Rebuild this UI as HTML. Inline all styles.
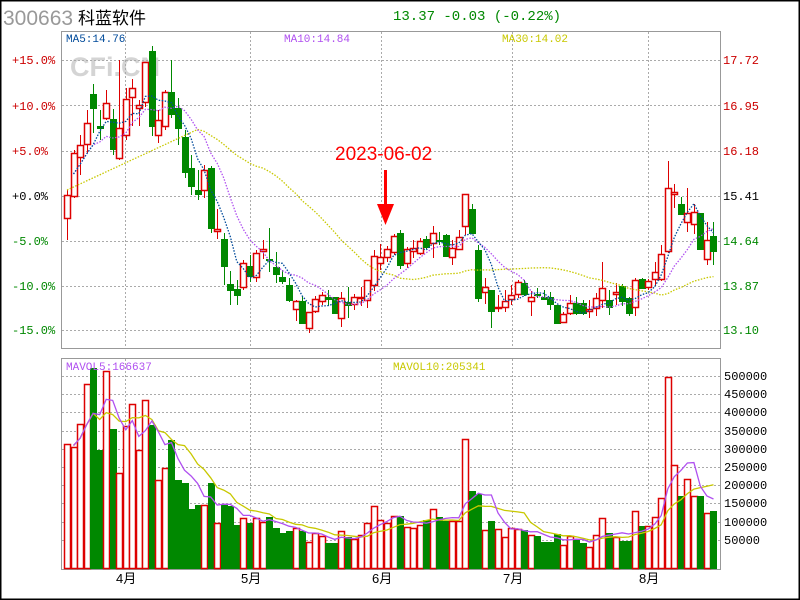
<!DOCTYPE html>
<html><head><meta charset="utf-8"><style>
html,body{margin:0;padding:0;background:#fff;}
#w{position:relative;width:800px;height:600px;overflow:hidden;}
svg{position:absolute;left:0;top:0;}
</style></head><body><div id="w">
<svg id="s" width="800" height="600" xmlns="http://www.w3.org/2000/svg" font-family="Liberation Mono, monospace">
<rect x="0.5" y="0.5" width="799" height="599" fill="#fff" stroke="#000" stroke-width="2"/>
<text x="3" y="25" font-family="Liberation Sans, sans-serif" font-size="21" fill="#999">300663</text>
<text x="78" y="24" font-family="Liberation Sans, 'Noto Sans CJK SC', sans-serif" font-size="17" fill="#000">科蓝软件</text>
<text x="393" y="20" font-size="14" fill="#008800">13.37 -0.03 (-0.22%)</text>
<text x="70" y="76" font-family="Liberation Sans, sans-serif" font-weight="bold" font-size="27" fill="#d4d4d4">CFi.CN</text>
<g id="grid" stroke="#aaa" stroke-dasharray="2,2" stroke-width="1"></g>
<rect x="61.5" y="31.5" width="659" height="317" fill="none" stroke="#999"/>
<rect x="61.5" y="358.5" width="659" height="211" fill="none" stroke="#999"/>
<g id="c"></g>
<text x="66" y="42" font-size="11" fill="#004a9a">MA5:14.76</text>
<text x="284" y="42" font-size="11" fill="#b050f0">MA10:14.84</text>
<text x="502" y="42" font-size="11" fill="#c8c800">MA30:14.02</text>
<text x="66" y="370" font-size="11" fill="#b050f0">MAVOL5:166637</text>
<text x="393" y="370" font-size="11" fill="#c8c800">MAVOL10:205341</text>
<g font-size="12">
<text x="12" y="64" fill="#cc0000">+15.0%</text>
<text x="12" y="110" fill="#cc0000">+10.0%</text>
<text x="12" y="155" fill="#cc0000">+5.0%</text>
<text x="12" y="200" fill="#000">+0.0%</text>
<text x="12" y="245" fill="#008800">-5.0%</text>
<text x="12" y="290" fill="#008800">-10.0%</text>
<text x="12" y="334" fill="#008800">-15.0%</text>
<text x="723" y="64" fill="#cc0000">17.72</text>
<text x="723" y="110" fill="#cc0000">16.95</text>
<text x="723" y="155" fill="#cc0000">16.18</text>
<text x="723" y="200" fill="#000">15.41</text>
<text x="723" y="245" fill="#008800">14.64</text>
<text x="723" y="290" fill="#008800">13.87</text>
<text x="723" y="334" fill="#008800">13.10</text>
</g>
<g font-size="12" fill="#000">
<text x="724" y="380">500000</text><text x="724" y="398">450000</text><text x="724" y="416">400000</text>
<text x="724" y="435">350000</text><text x="724" y="453">300000</text><text x="724" y="471">250000</text>
<text x="724" y="489">200000</text><text x="724" y="507">150000</text><text x="724" y="526">100000</text>
<text x="724" y="544">50000</text>
</g>
<g font-size="13" fill="#000" font-family="Liberation Sans, 'Noto Sans CJK SC', sans-serif">
<text x="116" y="583">4月</text><text x="241" y="583">5月</text><text x="372" y="583">6月</text>
<text x="503" y="583">7月</text><text x="639" y="583">8月</text>
</g>
<text x="335" y="160" font-size="19" fill="#ff0000" font-family="Liberation Sans, sans-serif">2023-06-02</text>
<rect x="384" y="170" width="3" height="42" fill="#ff0000"/>
<polygon points="377,204 394,204 385.5,225" fill="#ff0000"/>
</svg>
<script>
var NS="http://www.w3.org/2000/svg";
function el(p,t,a){var e=document.createElementNS(NS,t);for(var k in a)e.setAttribute(k,a[k]);p.appendChild(e);return e;}
var g=document.getElementById('grid');
[60,105,151,196,241,286,330].forEach(function(y){el(g,'line',{x1:62,x2:720,y1:y+.5,y2:y+.5});});
for(var y=376;y<=541;y+=18.2){el(g,'line',{x1:62,x2:720,y1:Math.round(y)+.5,y2:Math.round(y)+.5});}
[125,250,381,512,648].forEach(function(x){el(g,'line',{x1:x+.5,x2:x+.5,y1:32,y2:348});el(g,'line',{x1:x+.5,x2:x+.5,y1:359,y2:569});});
var C=[
['R',195,218,190,240],['R',153,196,150,198],['R',145,157,135,175],['R',123,144,110,153],['G',94,108,84,133],
['G',126,128,110,140],['R',103,118,90,120],['G',119,149,109,155],['R',128,158,60,160],['R',99,135,88,140],
['R',88,97,79,126],['R',105,108,100,126],['R',62,102,62,107],['G',51,126,46,136],['R',120,135,110,143],
['R',92,126,90,130],['G',92,114,60,118],['G',108,128,98,145],['G',137,172,130,178],['G',168,186,155,195],
['G',190,194,170,200],['R',170,190,165,198],['G',168,228,166,233],['R',229,231,209,239],['G',239,266,233,285],
['G',284,290,271,305],['G',289,295,280,305],['R',263,287,260,290],['G',266,276,255,282],['R',253,277,250,282],
['R',249,251,240,259],['G',259,260,228,272],['G',267,274,252,283],['G',277,281,270,284],['G',285,300,278,302],
['R',301,309,300,321],['G',301,323,296,324],['R',312,328,312,333],['R',299,311,296,313],['R',295,301,292,305],
['G',297,299,290,306],['G',297,313,297,313],['R',298,318,292,327],['G',302,305,287,318],['R',297,304,294,310],
['R',297,298,287,306],['R',280,300,280,308],['R',256,285,250,291],['R',257,263,244,270],['R',249,257,246,262],
['R',236,252,234,255],['G',233,265,230,269],['R',249,263,247,268],['R',248,251,240,258],['R',241,253,238,255],
['G',239,247,236,249],['R',233,243,226,258],['G',240,241,232,245],['G',235,256,234,257],['R',248,257,240,265],
['R',237,249,230,250],['R',194,226,194,235],['G',209,233,204,234],['G',250,298,245,302],['R',287,292,278,304],
['G',290,311,290,328],['R',307,308,295,312],['R',301,307,290,312],['R',295,299,285,305],['R',282,294,280,298],
['G',283,294,280,296],['R',297,301,291,316],['G',294,295,288,298],['G',297,299,290,300],['G',297,304,292,310],
['G',305,323,305,324],['R',314,322,312,323],['R',303,313,295,315],['G',303,313,297,315],['G',303,313,300,315],
['R',309,311,300,318],['R',298,308,293,316],['R',288,300,262,308],['G',300,307,290,315],['R',292,294,283,305],
['G',286,301,284,306],['G',298,313,297,316],['R',280,307,278,316],['G',279,288,278,289],['R',281,287,279,290],
['R',272,279,262,286],['R',254,279,245,281],['R',188,251,161,253],['R',192,194,184,208],['G',204,214,197,215],
['R',213,222,188,232],['R',212,224,204,234],['G',213,249,213,250],['R',240,259,222,265],['G',236,251,222,265]];
var V=[444,447,424,384,368,450,371,429,473,426,404,450,400,425,480,468,440,480,483,509,505,505,483,523,505,506,525,518,523,518,
522,517,528,533,531,528,531,542,533,536,543,543,531,537,539,535,523,506,520,523,516,516,527,528,525,520,509,517,521,521,
521,439,491,494,530,521,529,537,528,529,530,535,536,542,542,534,545,536,539,543,547,535,518,533,537,541,541,511,526,526,
517,498,377,465,496,479,496,496,513,511];
var c=document.getElementById('c');
var RED='#dd0000',GRN='#008800',X0=67,ST=6.53;
var close=[],vol=[];
C.forEach(function(d,i){
 var x=Math.round(X0+i*ST),col=d[0]=='R'?RED:GRN;
 close.push(d[0]=='R'?d[1]:d[2]);
 el(c,'line',{x1:x+.5,x2:x+.5,y1:d[3],y2:d[4],stroke:col});
 var h=Math.max(1,d[2]-d[1]);
 if(d[0]=='R'){el(c,'rect',{x:x-2.5,y:d[1]+.5,width:6,height:h,fill:'#fff',stroke:col,'stroke-width':1.5});}
 else el(c,'rect',{x:x-3,y:d[1],width:7,height:h+1,fill:col});
 var vt=V[i];vol.push(569-vt);
 if(d[0]=='R')el(c,'rect',{x:x-2.5,y:vt+.5,width:6,height:568-vt,fill:'#fff',stroke:col,'stroke-width':1.5});
 else el(c,'rect',{x:x-3,y:vt,width:7,height:569-vt,fill:col});
});
function ma(a,n){var r=[];for(var i=0;i<a.length;i++){var s=0,k=0;for(var j=Math.max(0,i-n+1);j<=i;j++){s+=a[j];k++;}r.push(s/k);}return r;}
function pl(a,col,dash,start,off){var p=[];for(var i=start;i<a.length;i++)p.push((X0+i*ST).toFixed(1)+','+(off?569-a[i]:a[i]).toFixed(1));
 var o={points:p.join(' '),fill:'none',stroke:col,'stroke-width':1.3};if(dash)o['stroke-dasharray']=dash;el(c,'polyline',o);}
var m30=ma(close,30).map(function(v,i){return i<8?190-i*5+(v-190)*0.0:v;});
for(var i=0;i<m30.length;i++){if(i<20){var t=i/20;m30[i]=190*(1-t)+ma(close,30)[i]*t*0+ (i<20?190-45*t:0);} }
var mm=ma(close,30);for(var i=20;i<m30.length;i++)m30[i]=mm[i];
var blend=m30[20];for(var i=0;i<20;i++){m30[i]=190+(blend-190)*i/20;}
pl(m30,'#c8c800','1.5,1.5',0,false);
pl(ma(close,10),'#b050f0','1.5,1.5',1,false);
pl(ma(close,5),'#004a9a','1.5,1.5',1,false);
pl(ma(vol,10),'#c8c800',null,1,true);
pl(ma(vol,5),'#b050f0',null,1,true);
</script>
</div></body></html>
